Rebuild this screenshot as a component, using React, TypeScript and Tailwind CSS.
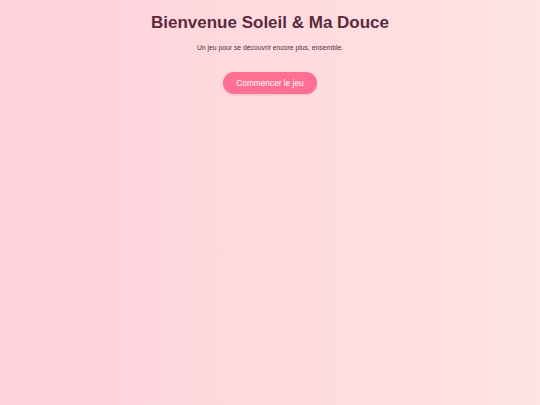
export default function App() {
  return (
    <div
      className="min-h-screen w-full bg-gradient-to-r from-[#ffd1dc] to-[#ffe4e1] flex flex-col items-center text-center"
      style={{ fontFamily: '"Liberation Sans", Arial, sans-serif' }}
    >
      <h1 className="mt-[12px] text-[17px] leading-[22px] font-bold text-[#5c2a3c]">
        Bienvenue Soleil &amp; Ma Douce
      </h1>
      <p className="mt-[9px] text-[6.8px] leading-[9px] text-[#5c2a3c]">
        Un jeu pour se découvrir encore plus, ensemble.
      </p>
      <button className="mt-[20px] h-[22px] px-[13.5px] rounded-full bg-[#ff6f91] text-white text-[8.3px] shadow-sm">
        Commencer le jeu
      </button>
    </div>
  );
}
